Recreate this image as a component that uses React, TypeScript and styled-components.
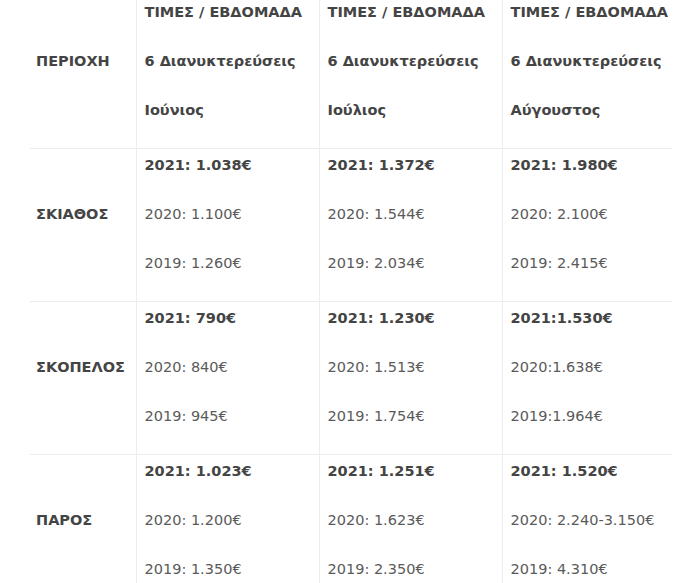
import React from "react";
import styled, { createGlobalStyle } from "styled-components";

const GlobalStyle = createGlobalStyle`
  body {
    margin: 0;
    background: #fff;
    font-family: "DejaVu Sans", Verdana, sans-serif;
  }
`;

interface Row {
  area: string,
  cells: Array<Array<string>>
}

const header: Array<Array<string>> = [
  ["ΤΙΜΕΣ / ΕΒΔΟΜΑΔΑ", "6 Διανυκτερεύσεις", "Ιούνιος"],
  ["ΤΙΜΕΣ / ΕΒΔΟΜΑΔΑ", "6  Διανυκτερεύσεις", "Ιούλιος"],
  ["ΤΙΜΕΣ / ΕΒΔΟΜΑΔΑ", "6 Διανυκτερεύσεις", "Αύγουστος"],
];

const rows: Array<Row> = [
  {
    area: "ΣΚΙΑΘΟΣ",
    cells: [
      ["2021: 1.038€", "2020: 1.100€", "2019: 1.260€"],
      ["2021: 1.372€", "2020: 1.544€", "2019: 2.034€"],
      ["2021: 1.980€", "2020: 2.100€", "2019: 2.415€"],
    ],
  },
  {
    area: "ΣΚΟΠΕΛΟΣ",
    cells: [
      ["2021: 790€", "2020: 840€", "2019: 945€"],
      ["2021: 1.230€", "2020: 1.513€", "2019: 1.754€"],
      ["2021:1.530€", "2020:1.638€", "2019:1.964€"],
    ],
  },
  {
    area: "ΠΑΡΟΣ",
    cells: [
      ["2021: 1.023€", "2020: 1.200€", "2019: 1.350€"],
      ["2021: 1.251€", "2020: 1.623€", "2019: 2.350€"],
      ["2021: 1.520€", "2020: 2.240-3.150€", "2019: 4.310€"],
    ],
  },
];

const widths = [106, 183, 183, 170];

const App = () => {
  return (
    <>
      <GlobalStyle />
      <Wrapper>
        <PriceTable>
          <colgroup>
            {widths.map((w, i) => <col key={i} style={{ width: w }} />)}
          </colgroup>
          <tbody>
            <Tr>
              <AreaCell>ΠΕΡΙΟΧΗ</AreaCell>
              {header.map((lines, i) => (
                <Cell key={i}>
                  {lines.map((l) => <Line key={l} bold>{l}</Line>)}
                </Cell>
              ))}
            </Tr>
            {rows.map((row) => (
              <Tr key={row.area}>
                <AreaCell>{row.area}</AreaCell>
                {row.cells.map((lines, i) => (
                  <Cell key={i}>
                    {lines.map((l, j) => <Line key={l} bold={j === 0}>{l}</Line>)}
                  </Cell>
                ))}
              </Tr>
            ))}
          </tbody>
        </PriceTable>
      </Wrapper>
    </>
  );
};

const Wrapper = styled.div`
  padding-left: 30px;
  margin-top: -4px;
`;

const PriceTable = styled.table`
  border-collapse: collapse;
  table-layout: fixed;
  width: 642px;
  font-size: 14.5px;
  color: #555;
`;

const Tr = styled.tr`
  border-bottom: 1px solid #ececec;
`;

const Cell = styled.td`
  vertical-align: top;
  padding: 6px 4px 0 8px;
  border-left: 1px solid #ececec;
  white-space: nowrap;
`;

const AreaCell = styled.td`
  vertical-align: middle;
  padding: 0 0 22px 6px;
  font-weight: bold;
  color: #444;
  white-space: nowrap;
`;

const Line = styled.p<{ bold?: boolean }>`
  margin: 0 0 29px;
  line-height: 20px;
  font-weight: ${({ bold }) => (bold ? "bold" : "normal")};
  color: ${({ bold }) => (bold ? "#444" : "#5a5a5a")};

  &:last-child {
    margin-bottom: 28px;
  }
`;

export default App;
